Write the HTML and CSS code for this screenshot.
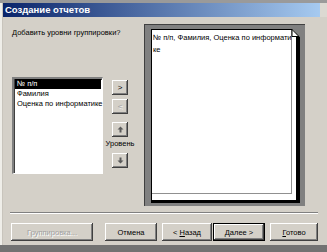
FILE: index.html
```html
<!DOCTYPE html>
<html lang="ru">
<head>
    <meta charset="UTF-8">
    <meta name="viewport" content="width=device-width, initial-scale=1.0">
    <title>Создание отчетов</title>
    <link rel="stylesheet" href="styles.css">
</head>
<body>
    <div class="screen">
        <div class="top-strip"></div>
        <div class="frame">
            <div class="left-strip"></div>
            <div class="window">
                <div class="titlebar">
                    <span class="title">Создание отчетов</span>
                    <span class="title-end"></span>
                </div>
                <div class="dialog">
                    <div class="main">
                        <div class="left">
                            <p class="question">Добавить уровни группировки?</p>
                            <div class="picker">
                                <ul class="fields">
                                    <li class="selected">№ п/п</li>
                                    <li>Фамилия</li>
                                    <li>Оценка по информатике</li>
                                </ul>
                                <div class="movers">
                                    <button class="small-btn">&gt;</button>
                                    <button class="small-btn disabled">&lt;</button>
                                    <button class="small-btn up">
                                        <svg width="7" height="7" viewBox="0 0 7 7"><polygon points="3.5,0.5 6.5,3.5 4.5,3.5 4.5,6.5 2.5,6.5 2.5,3.5 0.5,3.5" fill="#5a5a5a"/></svg>
                                    </button>
                                    <span class="level">Уровень</span>
                                    <button class="small-btn down">
                                        <svg width="7" height="7" viewBox="0 0 7 7"><polygon points="3.5,6.5 6.5,3.5 4.5,3.5 4.5,0.5 2.5,0.5 2.5,3.5 0.5,3.5" fill="#5a5a5a"/></svg>
                                    </button>
                                </div>
                            </div>
                        </div>
                        <div class="preview">
                            <div class="page">
                                <div class="sheet">№ п/п, Фамилия, Оценка по информати<br>ке</div>
                                <svg class="fold" width="10" height="8" viewBox="0 0 10 8">
                                    <polygon points="2,0 10,0 10,8 9,8" fill="#808080"/>
                                    <polygon points="2,0.5 9,7.5 2,7.5" fill="#fff" stroke="#000" stroke-width="1"/>
                                </svg>
                            </div>
                        </div>
                    </div>
                    <div class="separator"></div>
                    <div class="buttons">
                        <button class="btn wide disabled">Группировка...</button>
                        <button class="btn cancel">Отмена</button>
                        <button class="btn back">&lt; <u>Н</u>азад</button>
                        <button class="btn next default"><u>Д</u>алее &gt;</button>
                        <button class="btn finish"><u>Г</u>отово</button>
                    </div>
                </div>
            </div>
        </div>
        <div class="bottom-strip"></div>
    </div>
</body>
</html>
```

FILE: styles.css
```css
* {
    box-sizing: border-box;
}
body {
    margin: 0;
    font-family: "Liberation Sans", Arial, sans-serif;
    font-size: 7.5px;
    color: #000;
    background-color: #d4d0c8;
}
.screen {
    width: 327px;
    height: 252px;
    display: flex;
    flex-direction: column;
    overflow: hidden;
}
.top-strip {
    height: 3px;
    background-color: #9a9a9a;
}
.frame {
    display: flex;
    height: 242px;
}
.left-strip {
    width: 3px;
    background-color: #efeee9;
    border-right: 1px solid #c8c4bc;
}
.window {
    flex: 1;
    display: flex;
    flex-direction: column;
    background-color: #d4d0c8;
}
.bottom-strip {
    height: 7px;
    background-color: #727272;
}
/* ---------------------------title bar------------------------------ */
.titlebar {
    display: flex;
    height: 14px;
}
.title {
    flex: 1;
    background: linear-gradient(to right, #0a246a, #a6caf0);
    color: #fff;
    font-weight: bold;
    font-size: 9.5px;
    line-height: 14px;
    padding-left: 2px;
}
.title-end {
    width: 7px;
    background-color: #dcd9d2;
}
/* ---------------------------dialog------------------------------ */
.dialog {
    flex: 1;
    display: flex;
    flex-direction: column;
}
.main {
    display: flex;
    padding: 7px 0 0 9px;
}
.left {
    width: 129px;
}
.question {
    margin: 3px 0 0 0;
    line-height: 11px;
    white-space: nowrap;
}
.picker {
    display: flex;
    margin-top: 39px;
}
.fields {
    list-style: none;
    margin: 0;
    padding: 0 1px;
    width: 91px;
    height: 97px;
    background-color: #fff;
    border-top: 2px solid #808080;
    border-left: 2px solid #808080;
    border-right: 1px solid #fff;
    border-bottom: 1px solid #fff;
    box-shadow: inset 1px 1px 0 #404040;
}
.fields li {
    line-height: 10px;
    padding-left: 2px;
    white-space: nowrap;
}
.fields .selected {
    background-color: #000;
    color: #fff;
}
.movers {
    width: 32px;
    margin-left: 1px;
    display: flex;
    flex-direction: column;
    align-items: center;
    padding-top: 3px;
}
.small-btn {
    width: 16px;
    height: 15px;
    padding: 0;
    border: none;
    background-color: #d4d0c8;
    font-family: inherit;
    font-size: 8px;
    color: #000;
    display: flex;
    align-items: center;
    justify-content: center;
    box-shadow: inset -1px -1px #404040, inset 1px 1px #fff, inset -2px -2px #808080;
    margin-bottom: 4px;
}
.small-btn.disabled {
    color: #a0a0a0;
    text-shadow: 1px 1px #fff;
    margin-bottom: 8px;
}
.small-btn.up {
    margin-bottom: 1px;
}
.small-btn.down {
    margin-top: 4px;
}
.level {
    line-height: 11px;
    white-space: nowrap;
}
/* ---------------------------preview------------------------------ */
.preview {
    width: 161px;
    height: 182px;
    margin-left: 3px;
    background-color: #808080;
    border-top: 1px solid #404040;
    border-left: 1px solid #404040;
    padding: 4px 5px 3px 6px;
}
.page {
    position: relative;
    height: 100%;
    background-color: #fff;
    border-top: 1px solid #000;
    border-left: 1px solid #000;
    border-right: 4px solid #000;
    border-bottom: 3px solid #000;
    padding: 0 4px 6px 0;
}
.sheet {
    height: 100%;
    border-right: 1px solid #909090;
    border-bottom: 1px solid #909090;
    padding: 2px 0 0 1px;
    line-height: 12px;
    white-space: nowrap;
}
.fold {
    position: absolute;
    top: -1px;
    right: -4px;
}
/* ---------------------------bottom------------------------------ */
.separator {
    margin: 6px 0 0 7px;
    width: 308px;
    border-top: 1px solid #808080;
    border-bottom: 1px solid #fff;
}
.buttons {
    display: flex;
    margin: 9px 0 0 8px;
}
.btn {
    height: 18px;
    padding: 0;
    border: none;
    background-color: #d4d0c8;
    font-family: inherit;
    font-size: 7.5px;
    color: #000;
    box-shadow: inset -1px -1px #404040, inset 1px 1px #fff, inset -2px -2px #808080;
}
.btn.wide {
    width: 82px;
}
.btn.disabled {
    color: #a0a0a0;
    text-shadow: 1px 1px #fff;
}
.btn.cancel {
    width: 52px;
    margin-left: 12px;
}
.btn.back {
    width: 50px;
    margin-left: 5px;
}
.btn.next {
    width: 52px;
    margin-left: 1px;
}
.btn.default {
    box-shadow: inset 0 0 0 1px #000, inset -2px -2px #404040, inset 2px 2px #fff, inset -3px -3px #808080;
}
.btn.finish {
    width: 48px;
    margin-left: 5px;
}
```
